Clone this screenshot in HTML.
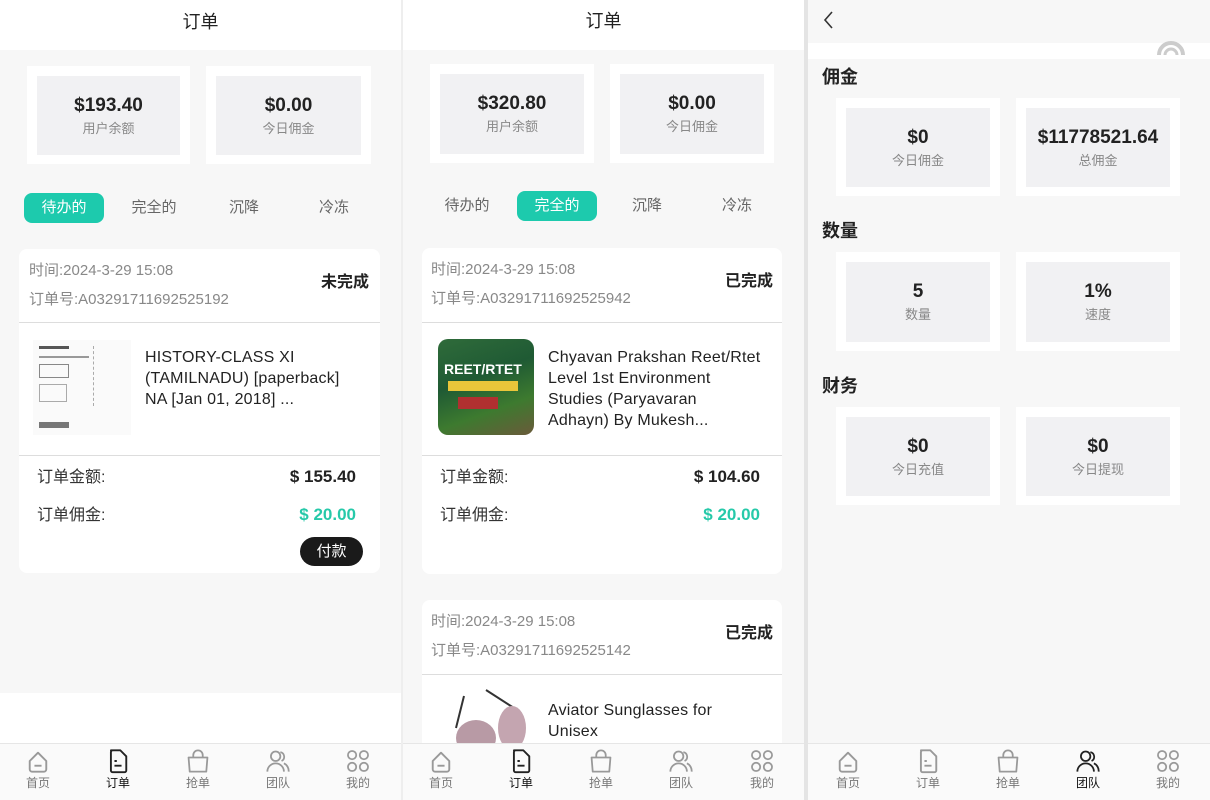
<!DOCTYPE html>
<html><head><meta charset="utf-8"><style>
*{margin:0;padding:0;box-sizing:border-box}
body{width:1210px;height:800px;overflow:hidden;background:#fff;font-family:"Liberation Sans","Noto Sans CJK SC",sans-serif;position:relative;color:#222}
.a{position:absolute}
.p{position:absolute;top:0;height:800px;background:#f7f7f7;overflow:hidden}
.hdr{position:absolute;left:0;right:0;top:0;height:50px;background:#fff;text-align:center;font-size:18px;line-height:44px;color:#222}
.so{position:absolute;background:#fff}
.si{position:absolute;left:10px;right:10px;top:10px;bottom:9px;background:#f1f1f3;text-align:center}
.si b{display:block;font-size:19px;margin-top:19px;color:#222}
.si span{display:block;font-size:13px;color:#888;margin-top:1px}
.tab{position:absolute;font-size:15px;color:#666;text-align:center;width:80px;height:30px;line-height:30px;border-radius:8px}
.tab.on{background:#1dcaad;color:#fff}
.card{position:absolute;background:#fff;border-radius:8px;overflow:hidden}
.g{color:#888;font-size:15px}
.st{font-weight:bold;font-size:16px;position:absolute}
.hr{position:absolute;left:0;right:0;height:1px;background:#ddd}
.ti{position:absolute;font-size:16px;line-height:21px;color:#222;letter-spacing:0.2px;white-space:nowrap}
.lab{position:absolute;font-size:16px;color:#333;line-height:20px}
.amt{position:absolute;font-size:17px;font-weight:bold;text-align:right;line-height:20px}
.tb{position:absolute;left:0;right:0;top:743px;height:57px;background:#fafafa;border-top:1px solid #e6e6e6}
.ti2{position:absolute;width:60px;text-align:center;top:0}
.ti2 svg{display:block;margin:4px auto 0}
.ti2 span{display:block;font-size:12px;color:#777;margin-top:0}
.ti2.on span{color:#111}
.sec{position:absolute;left:14px;font-weight:bold;font-size:18px;color:#222}
</style></head><body>

<!-- PANEL 1 -->
<div class="p" style="left:0;width:401px">
 <div class="a" style="left:0;right:0;top:0;height:2px;background:#ddd"></div>
 <div class="hdr">订单</div>
 <div class="so" style="left:27px;top:66px;width:163px;height:98px"><div class="si"><b>$193.40</b><span>用户余额</span></div></div>
 <div class="so" style="left:206px;top:66px;width:165px;height:98px"><div class="si"><b>$0.00</b><span>今日佣金</span></div></div>
 <div class="tab on" style="left:24px;top:193px">待办的</div>
 <div class="tab" style="left:114px;top:193px">完全的</div>
 <div class="tab" style="left:204px;top:193px">沉降</div>
 <div class="tab" style="left:294px;top:193px">冷冻</div>
 <div class="card" style="left:19px;top:249px;width:361px;height:324px">
  <div class="a g" style="left:10px;top:10px">时间:2024-3-29 15:08</div>
  <div class="a g" style="left:10px;top:39px">订单号:A03291711692525192</div>
  <div class="st" style="right:11px;top:19px">未完成</div>
  <div class="hr" style="top:73px"></div>
  <div class="a" style="left:14px;top:91px;width:98px;height:95px;background:#fafafa">
   <div class="a" style="left:6px;top:6px;width:30px;height:3px;background:#555"></div>
   <div class="a" style="left:6px;top:16px;width:50px;height:2px;background:#999"></div>
   <div class="a" style="left:6px;top:24px;width:30px;height:14px;border:1px solid #888"></div>
   <div class="a" style="left:6px;top:44px;width:28px;height:18px;border:1px solid #aaa"></div>
   <div class="a" style="left:60px;top:6px;width:32px;height:60px;border-left:1px dashed #aaa"></div>
   <div class="a" style="left:6px;top:82px;width:30px;height:6px;background:#777"></div>
  </div>
  <div class="ti" style="left:126px;top:98px">HISTORY-CLASS XI<br>(TAMILNADU) [paperback]<br>NA [Jan 01, 2018] ...</div>
  <div class="hr" style="top:206px"></div>
  <div class="lab" style="left:18px;top:219px">订单金额:</div>
  <div class="amt" style="right:24px;top:218px;color:#222">$ 155.40</div>
  <div class="lab" style="left:18px;top:257px">订单佣金:</div>
  <div class="amt" style="right:24px;top:256px;color:#26c9a9">$ 20.00</div>
  <div class="a" style="left:281px;top:288px;width:63px;height:29px;border-radius:15px;background:#1a1a1a;color:#fff;font-size:15px;text-align:center;line-height:29px">付款</div>
 </div>
 <div class="a" style="left:0;right:0;top:693px;height:50px;background:#fff"></div>
 <div class="tb" id="tb1"></div>
</div>

<div class="a" style="left:401px;top:0;width:2px;height:800px;background:#eee"></div>

<!-- PANEL 2 -->
<div class="p" style="left:403px;width:401px">
 <div class="hdr" style="line-height:42px">订单</div>
 <div class="so" style="left:27px;top:64px;width:164px;height:99px"><div class="si"><b>$320.80</b><span>用户余额</span></div></div>
 <div class="so" style="left:207px;top:64px;width:164px;height:99px"><div class="si"><b>$0.00</b><span>今日佣金</span></div></div>
 <div class="tab" style="left:24px;top:191px">待办的</div>
 <div class="tab on" style="left:114px;top:191px">完全的</div>
 <div class="tab" style="left:204px;top:191px">沉降</div>
 <div class="tab" style="left:294px;top:191px">冷冻</div>
 <div class="card" style="left:19px;top:248px;width:360px;height:326px">
  <div class="a g" style="left:9px;top:10px">时间:2024-3-29 15:08</div>
  <div class="a g" style="left:9px;top:39px">订单号:A03291711692525942</div>
  <div class="st" style="right:9px;top:19px">已完成</div>
  <div class="hr" style="top:74px"></div>
  <div class="a" style="left:16px;top:91px;width:96px;height:96px;border-radius:10px;background:linear-gradient(160deg,#2f6b3a,#1f5a34 40%,#3d7a2f 70%,#6a5a3a)">
   <div class="a" style="left:6px;top:22px;font-size:14px;font-weight:bold;color:#fff">REET/RTET</div>
   <div class="a" style="left:10px;top:42px;width:70px;height:10px;background:#e9c63a"></div>
   <div class="a" style="left:20px;top:58px;width:40px;height:12px;background:#b03030"></div>
  </div>
  <div class="ti" style="left:126px;top:99px">Chyavan Prakshan Reet/Rtet<br>Level 1st Environment<br>Studies (Paryavaran<br>Adhayn) By Mukesh...</div>
  <div class="hr" style="top:207px"></div>
  <div class="lab" style="left:18px;top:220px">订单金额:</div>
  <div class="amt" style="right:22px;top:219px;color:#222">$ 104.60</div>
  <div class="lab" style="left:18px;top:258px">订单佣金:</div>
  <div class="amt" style="right:22px;top:257px;color:#26c9a9">$ 20.00</div>
 </div>
 <div class="card" style="left:19px;top:600px;width:360px;height:200px">
  <div class="a g" style="left:9px;top:10px">时间:2024-3-29 15:08</div>
  <div class="a g" style="left:9px;top:39px">订单号:A03291711692525142</div>
  <div class="st" style="right:9px;top:19px">已完成</div>
  <div class="hr" style="top:74px"></div>
  <svg class="a" style="left:14px;top:88px" width="100" height="60"><path d="M20 40 L28 8 M50 2 L78 20" stroke="#333" stroke-width="2" fill="none"/><ellipse cx="40" cy="50" rx="20" ry="18" fill="#b89aa5"/><ellipse cx="76" cy="40" rx="14" ry="22" fill="#c4a5b0"/></svg>
  <div class="ti" style="left:126px;top:100px">Aviator Sunglasses for<br>Unisex</div>
 </div>
 <div class="tb" id="tb2"></div>
</div>

<div class="a" style="left:804px;top:0;width:4px;height:800px;background:#e4e4e4"></div>

<!-- PANEL 3 -->
<div class="p" style="left:808px;width:402px">
 <svg class="a" style="left:14px;top:11px" width="14" height="18"><path d="M10 1 L3 9 L10 17" stroke="#333" stroke-width="1.6" fill="none"/></svg>
 <div class="a" style="left:0;right:0;top:43px;height:16px;background:#fff"></div>
 <svg class="a" style="left:345px;top:31px" width="36" height="28"><path d="M6 24 A12 12 0 1 1 30 24" stroke="#ccc" stroke-width="4" fill="none"/><path d="M12 24 A6 6 0 1 1 24 24" stroke="#ccc" stroke-width="3" fill="none"/></svg>
 <div class="sec" style="top:63px">佣金</div>
 <div class="so" style="left:28px;top:98px;width:164px;height:98px"><div class="si"><b>$0</b><span>今日佣金</span></div></div>
 <div class="so" style="left:208px;top:98px;width:164px;height:98px"><div class="si"><b>$11778521.64</b><span>总佣金</span></div></div>
 <div class="sec" style="top:217px">数量</div>
 <div class="so" style="left:28px;top:252px;width:164px;height:99px"><div class="si"><b>5</b><span>数量</span></div></div>
 <div class="so" style="left:208px;top:252px;width:164px;height:99px"><div class="si"><b>1%</b><span>速度</span></div></div>
 <div class="sec" style="top:372px">财务</div>
 <div class="so" style="left:28px;top:407px;width:164px;height:98px"><div class="si"><b>$0</b><span>今日充值</span></div></div>
 <div class="so" style="left:208px;top:407px;width:164px;height:98px"><div class="si"><b>$0</b><span>今日提现</span></div></div>
 <div class="tb" id="tb3"></div>
</div>

<script>
var icons=[
'<path d="M4 11 L11 4 L18 11 V18 a2 2 0 0 1 -2 2 H6 a2 2 0 0 1 -2 -2 Z" fill="none" stroke="C" stroke-width="1.6" stroke-linejoin="round"/><path d="M8 15 H14" stroke="C" stroke-width="1.6"/>',
'<path d="M5 2 H13 L18 7 V19 a1.5 1.5 0 0 1 -1.5 1.5 H6.5 A1.5 1.5 0 0 1 5 19 V3.5 A1.5 1.5 0 0 1 6.5 2 Z" fill="none" stroke="C" stroke-width="1.6" stroke-linejoin="round"/><path d="M8 11 H10 M8 15 H14" stroke="C" stroke-width="1.6"/>',
'<path d="M3 8 H19 L18 20 H4 Z" fill="none" stroke="C" stroke-width="1.5" stroke-linejoin="round"/><path d="M7 8 V6 a4 4 0 0 1 8 0 V8" fill="none" stroke="C" stroke-width="1.5"/>',
'<circle cx="9" cy="7" r="4" fill="none" stroke="C" stroke-width="1.5"/><path d="M2 20 a7 7 0 0 1 14 0" fill="none" stroke="C" stroke-width="1.5"/><path d="M13 3.5 a4 4 0 0 1 1 7.5 M16 13 a7 7 0 0 1 4 7" fill="none" stroke="C" stroke-width="1.5"/>',
'<circle cx="6" cy="6" r="3.5" fill="none" stroke="C" stroke-width="1.5"/><circle cx="16" cy="6" r="3.5" fill="none" stroke="C" stroke-width="1.5"/><circle cx="6" cy="16" r="3.5" fill="none" stroke="C" stroke-width="1.5"/><circle cx="16" cy="16" r="3.5" fill="none" stroke="C" stroke-width="1.5"/>'];
var labels=['首页','订单','抢单','团队','我的'];
function mk(id,cent,act){var h='';for(var i=0;i<5;i++){var c=i==act?'#222':'#999';h+='<div class="ti2'+(i==act?' on':'')+'" style="left:'+(cent[i]-30)+'px"><svg width="26" height="26" viewBox="0 0 22 22">'+icons[i].replace(/C/g,c)+'</svg><span>'+labels[i]+'</span></div>';}document.getElementById(id).innerHTML=h;}
mk('tb1',[38,118,198,278,358],1);
mk('tb2',[38,118,198,278,359],1);
mk('tb3',[40,120,200,280,360],3);
</script>
</body></html>
